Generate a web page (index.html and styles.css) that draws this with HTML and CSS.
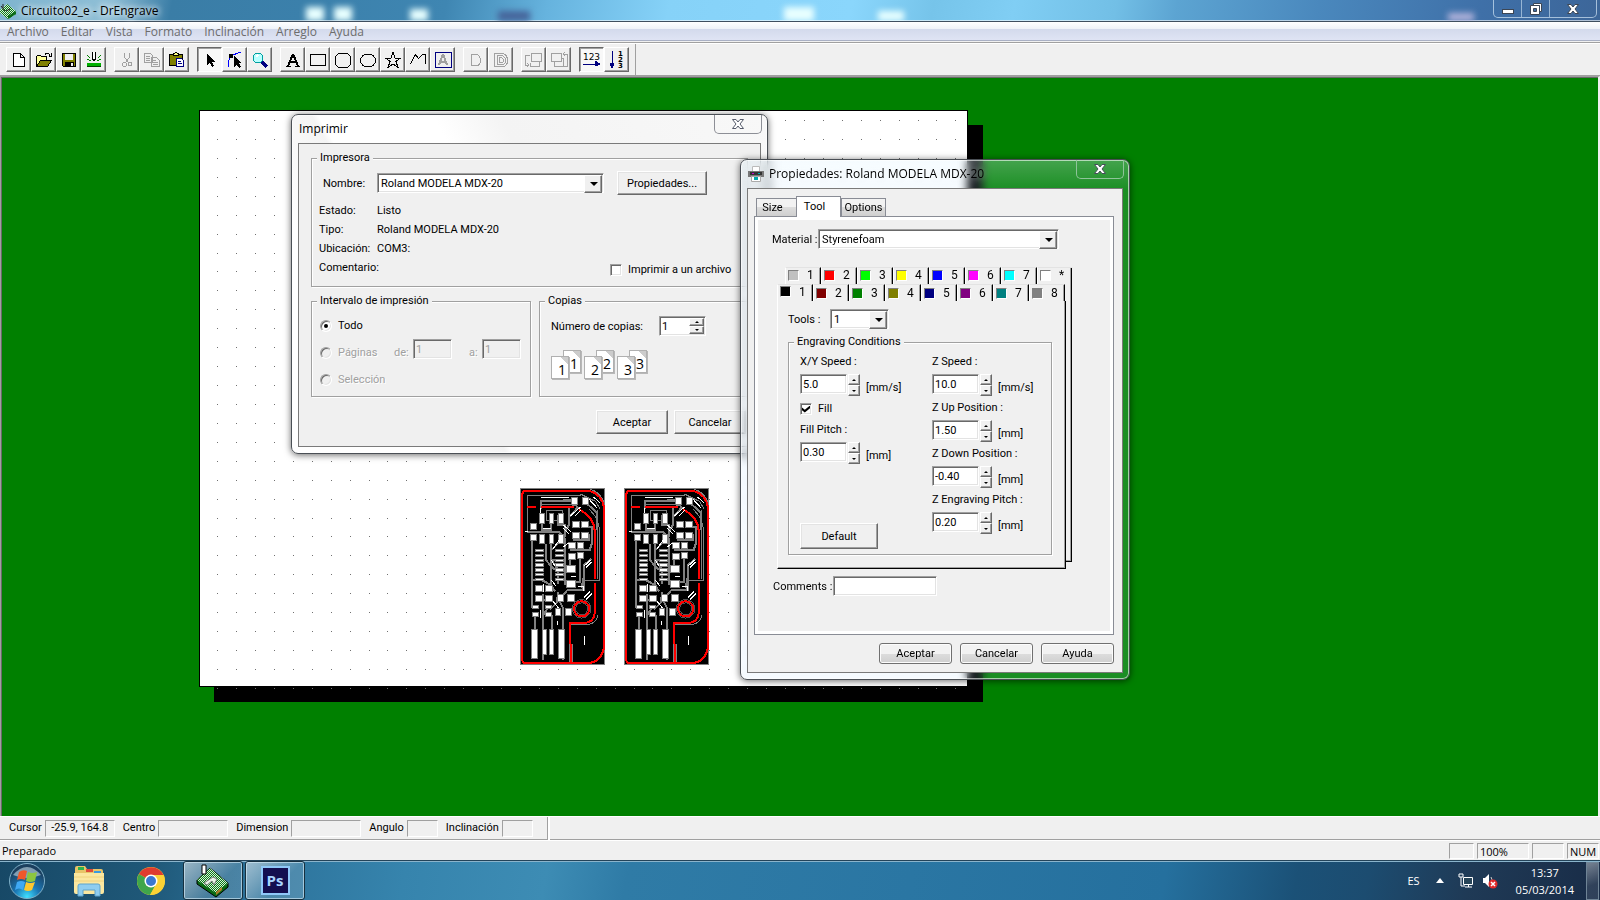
FILE: index.html
```html
<!DOCTYPE html>
<html lang="es">
<head>
  <meta charset="UTF-8" />
  <meta name="viewport" content="width=device-width, initial-scale=1.0"/>
  <title>Circuito02_e - DrEngrave</title>
  <link rel="stylesheet" href="styles.css">
</head>
<body>
  <!-- shared drawings -->
  <svg width="0" height="0" class="defs">
    <defs>
      <pattern id="weave" width="2" height="2" patternUnits="userSpaceOnUse">
        <rect width="2" height="2" fill="#0a7a1a"/>
        <rect width="1" height="1" fill="#d8f0d8"/>
        <rect x="1" y="1" width="1" height="1" fill="#d8f0d8"/>
      </pattern>
      <symbol id="board" viewBox="30 24 255 530">
        <rect x="30" y="24" width="255" height="530" fill="#000"/>
        <g fill="none" stroke="#808080" stroke-width="3">
          <rect x="31.500" y="25.500" width="252" height="527"/>
          <path d="M52 45h160M52 45v110M212 42l45 22 14 24M240 27q40 12 44 55M95 72h90M110 92h48v30h-48zM262 90v205M238 88q28 25 30 60v152h-48M178 434h55q28-5 30-30M178 434v110M188 490v56M186 75h14v18M285 500q-8 35-44 50"/>
        </g>
        <g fill="none" stroke="#808080" stroke-width="6">
          <path d="M52 155h95l18 22v36h-20M66 180v200h12M94 85V63h96M75 410v40M99 340v200M99 405l14-20M126 405v45M99 360h25M66 300h30l26 14 14 20M124 190v120M124 210l40-40V135h-20v-30M124 130v20M96 130v20h30M160 540V385l-15-30v-20M145 310v-40l-20-30h30M178 78v55l-14 22M180 235v20M210 235v70h-18M222 255l22-20M222 255v75h-50l-18 20M165 200v110h10M235 140h12v45l-8 25h-60M190 180h48v-20M160 60h30M230 70l32 28v50M205 80l-25 28M140 350v18l-20 20M108 190v50l26 30M215 325l5-30"/>
        </g>
        <g fill="none" stroke="red" stroke-width="6">
          <path d="M37 42q0-9 9-9h194q36 10 42 50v420q-8 40-44 46H46q-9 0-9-9z"/>
          <path d="M52 81h27M94 81h98M208 88q44 24 46 62v147M254 309v92q-4 25-28 27h-46v62M182 490v58"/>
          <circle cx="215" cy="386" r="23"/>
        </g>
        <g fill="none" stroke="#808080" stroke-width="2">
          <circle cx="215" cy="386" r="28"/>
          <circle cx="215" cy="386" r="18"/>
        </g>
        <g fill="#fff" stroke="#808080" stroke-width="3">
          <path d="M89 100h14v30H89zM118 100h13v30h-13zM146 100h15v30h-15zM62 131h17v17H62zM62 162h17v19H62zM89 164h14v26H89zM118 164h12v26h-12zM146 164h15v26h-15zM184 53h18v20h-18zM218 53h18v20h-18zM188 125h20v16h-20zM215 125h20v16h-20zM188 157h20v18h-20zM215 157h20v18h-20zM176 188h21v17h-21zM203 188h17v17h-17zM176 220h21v17h-21zM203 218h17v17h-17zM169 256h28v22h-28zM169 301h28v21h-28zM77 317h21v17H77zM107 317h20v17h-20zM77 346h21v18H77zM107 346h20v18h-20zM143 344h16v20h-16zM173 343h20v20h-20zM135 386h16v20h-16zM167 386h17v20h-17zM67 376h18v9H67zM105 376h20v9h-20zM67 398h18v11H67zM105 398h20v11h-20zM64 448h18v87H64zM97 448h12v75H97zM118 448h12v75h-12zM146 448h18v87h-18z"/>
          <path d="M77 208h24v6H77zM77 223h24v6H77zM77 237h24v6H77zM77 251h24v9H77zM77 265h24v9H77zM77 281h24v6H77zM77 295h24v6H77zM135 208h26v6h-26zM135 223h26v6h-26zM135 237h26v6h-26zM135 251h26v9h-26zM135 265h26v9h-26zM135 281h26v6h-26zM135 295h26v6h-26z"/>
        </g>
        <g fill="none" stroke="#fff" stroke-width="3">
          <path d="M92 52h84M180 108l32-28M196 106l16-16M236 56l26 28M250 50l20 18M160 134l24 22M158 142l20 20M130 205l18-26M124 240l10 16M222 258l22-20M228 262l16-16M222 352l18-18M228 358l18-18M130 364l16 20M183 289h16M92 390v24M124 300l14 18M160 200l16-12M45 155h8M142 422v12M223 468v26M100 312v22M205 320h14v12M90 82v16M100 145h24"/>
        </g>
      </symbol>
    </defs>
  </svg>

  <header class="titlebar">
    <svg class="app-icon" width="16" height="18" viewBox="0 0 16 18">
      <path d="M0 8L7 2l9 7v3l-8 5-8-6z" fill="url(#weave)"/>
      <path d="M8 14l8-5v3l-8 5z" fill="#0a6a14"/>
      <path d="M1 4l4 5M3 2v4M6 9l4-2" stroke="#222" fill="none"/>
    </svg>
    <h1>Circuito02_e - DrEngrave</h1>
    <div class="wallpaper"><i class="blob b1"></i><i class="blob b2"></i><i class="blob b3"></i><i class="blob b4"></i><i class="blob b5"></i><i class="blob b6"></i><i class="blob b7"></i></div>
    <div class="window-buttons">
      <button aria-label="Minimizar"><svg width="12" height="10" viewBox="0 0 12 10"><rect x=".5" y="5.500" width="11" height="4" fill="#fff" stroke="#3c4654"/></svg></button>
      <button aria-label="Restaurar"><svg width="12" height="12" viewBox="0 0 12 12"><path d="M3.500.5h8v8h-2v-6h-6z" fill="#fff" stroke="#3c4654"/><path d="M.5 2.500h9v9h-9zM3.500 5.500v3h3v-3z" fill="#fff" fill-rule="evenodd" stroke="#3c4654"/></svg></button>
      <button aria-label="Cerrar" class="close"><svg width="12" height="10" viewBox="0 0 12 10"><path d="M.5.5h3.500l2 2.500 2-2.500h3.500L8 5l3.500 4.500H8L6 7 4 9.500H.5L4 5z" fill="#fff" stroke="#3c4654"/></svg></button>
    </div>
  </header>

  <nav class="menubar">
    <a href="#">Archivo</a>
    <a href="#">Editar</a>
    <a href="#">Vista</a>
    <a href="#">Formato</a>
    <a href="#">Inclinación</a>
    <a href="#">Arreglo</a>
    <a href="#">Ayuda</a>
  </nav>

  <div class="toolbar">
    <div class="tool-group">
      <button aria-label="Nuevo"><svg viewBox="0 0 20 20"><path d="M4.500 3.500h7l4 4v9h-11zM11.500 3.500v4h4" fill="#fff" stroke="#000"/></svg></button>
      <button aria-label="Abrir"><svg viewBox="0 0 20 20"><path d="M2.500 16.500v-10l1-1h3l1 1h5v3" fill="#ffff9c" stroke="#000"/><path d="M2.500 16.500l4-6h11l-4 6z" fill="#808000" stroke="#000"/><path d="M11 4.500q3-3 5 1M17.500 3v3h-3" fill="none" stroke="#000"/></svg></button>
      <button aria-label="Guardar"><svg viewBox="0 0 20 20"><path d="M3.500 3.500h13v13h-12l-1-1z" fill="#808000" stroke="#000"/><path d="M6 4h8v6H6z" fill="#efefef"/><path d="M6 12h9v4H6z" fill="#000"/><path d="M12 13h2v3h-2z" fill="#efefef"/></svg></button>
      <button aria-label="Grabar"><svg viewBox="0 0 20 20"><path d="M8.500 2v7l1.500 2 1.500-2V2" fill="#fff" stroke="#000"/><path d="M3 5l3 3M3 9l4 2M17 5l-3 3M17 9l-4 2" stroke="#008000" fill="none"/><path d="M3 13h14v4H3z" fill="#00b000"/><path d="M3 16h14v1H3z" fill="#004000"/></svg></button>
    </div>
    <div class="tool-group">
      <button aria-label="Cortar" disabled><svg viewBox="0 0 20 20"><g fill="none" stroke="#a0a0a0"><path d="M7.500 3v4l4 6M12.500 3v4l-4 6"/><circle cx="7.500" cy="14.500" r="2"/><circle cx="13" cy="14" r="2"/></g></svg></button>
      <button aria-label="Copiar" disabled><svg viewBox="0 0 20 20"><g fill="#efefef" stroke="#a0a0a0"><path d="M2.500 3.500h6l2 2v7h-8zM9.500 7.500h5l3 3v6h-8z"/><path d="M4 6h4M4 8h4M4 10h4M11 10h3M11 12h5M11 14h5"/></g></svg></button>
      <button aria-label="Pegar"><svg viewBox="0 0 20 20"><path d="M2.500 4.500h13v11h-13z" fill="#808000" stroke="#000"/><path d="M6.500 5.500v-2h1l1-1h1l1 1h1v2z" fill="#ffff80" stroke="#000"/><path d="M9.500 8.500h5l2 2v6h-7z" fill="#fff" stroke="#000080"/><path d="M11 11h3M11 13h4" stroke="#000080"/></svg></button>
    </div>
    <div class="tool-group">
      <button aria-label="Seleccionar" class="pressed"><svg viewBox="0 0 20 20"><path d="M7 4v11l3-2 2 4 2-1-2-4h3z" fill="#000"/></svg></button>
      <button aria-label="Editar nodos"><svg viewBox="0 0 20 20"><path d="M3.500 17q0-8 2-11l10-4" fill="none" stroke="#00f"/><path d="M4 4h4v4H4z" fill="#000"/><path d="M9 6v11l3-2 2 3 2-1-2-4h3z" fill="#000"/></svg></button>
      <button aria-label="Zoom"><svg viewBox="0 0 20 20"><circle cx="8" cy="8" r="5" fill="#b8ffff" stroke="#00a0a0"/><path d="M6 7l2-2" stroke="#fff" stroke-width="2"/><path d="M12 12l5 5" stroke="#000080" stroke-width="4"/></svg></button>
    </div>
    <div class="tool-group">
      <button aria-label="Texto"><svg viewBox="0 0 20 20"><path d="M5 16L9.500 5h1L15 16M7 12h6" fill="none" stroke="#000" stroke-width="2"/><path d="M3 16.500h5M12 16.500h5" stroke="#000"/></svg></button>
      <button aria-label="Rectángulo"><svg viewBox="0 0 20 20"><path d="M2.500 4.500h15v11h-15z" fill="none" stroke="#000"/></svg></button>
      <button aria-label="Rectángulo redondeado"><svg viewBox="0 0 20 20"><path d="M5.500 3.500h9l3 3v8l-3 3h-9l-3-3v-8z" fill="none" stroke="#000"/></svg></button>
      <button aria-label="Elipse"><svg viewBox="0 0 20 20"><ellipse cx="10" cy="10.500" rx="7.500" ry="6.500" fill="none" stroke="#000"/></svg></button>
      <button aria-label="Estrella"><svg viewBox="0 0 20 20"><path d="M10 2.500l2 5.500h5.500l-4.500 3.500 2 6-5-3.500-5 3.500 2-6L2.500 8H8z" fill="none" stroke="#000"/></svg></button>
      <button aria-label="Polilínea"><svg viewBox="0 0 20 20"><path d="M2.500 14l5-9.500 3 4 4-4h2.500v9" fill="none" stroke="#000"/></svg></button>
      <button aria-label="Marco de texto"><svg viewBox="0 0 20 20"><path d="M2 2.500h16v15H2z" fill="#efefef" stroke="#000080"/><path d="M6 15l3.500-10h1L14 15M7.500 11.500h5" fill="none" stroke="#a0a0a0" stroke-width="2"/></svg></button>
    </div>
    <div class="tool-group">
      <button aria-label="Contorno" disabled><svg viewBox="0 0 20 20"><path d="M5.500 4.500h5q4 1 4 6t-4 5h-5z" fill="none" stroke="#a0a0a0"/></svg></button>
      <button aria-label="Contorno doble" disabled><svg viewBox="0 0 20 20"><path d="M3.500 3.500h8q5 1 5 7t-5 6h-8zM6.500 5.500h4q4 1 4 5t-4 4h-4zM8.500 7.500h2q2 1 2 3t-2 2h-2z" fill="none" stroke="#a0a0a0"/></svg></button>
    </div>
    <div class="tool-group">
      <button aria-label="Enviar atrás" disabled><svg viewBox="0 0 20 20"><path d="M7.500 3.500h10v8h-10zM15.500 12v4.500h-9v-4M1.500 5v10h3M2 5h4M3 13l2 2-2 2" fill="none" stroke="#a0a0a0"/></svg></button>
      <button aria-label="Traer al frente" disabled><svg viewBox="0 0 20 20"><path d="M2.500 3.500h10v8h-10zM5.500 12v4.500h9V8h-2M14 4.500h4V16h-3M16 2l-2 2 2 2" fill="none" stroke="#a0a0a0"/></svg></button>
    </div>
    <div class="tool-group">
      <button class="pressed horizontal"><span>123</span><svg viewBox="0 0 18 5"><path d="M0 3h17M12 0l5 3-5 2z" fill="#000080" stroke="#000080"/></svg></button>
      <button class="vertical"><svg viewBox="0 0 5 18"><path d="M2 0v17M0 12l2 5 2-5z" fill="#000080" stroke="#000080"/></svg><span>1<br>2<br>3</span></button>
    </div>
  </div>

  <main class="workspace">
    <div class="sheet">
      <svg id="dots" width="768" height="578"></svg>
      <svg class="board first" width="85" height="177"><use href="#board"/></svg>
      <svg class="board second" width="85" height="177"><use href="#board"/></svg>
    </div>
  </main>

  <footer class="infobar">
    <span>Cursor</span><output class="wide">-25.9, 164.8</output>
    <span>Centro</span><output class="wide"></output>
    <span>Dimension</span><output class="wide"></output>
    <span>Angulo</span><output class="narrow"></output>
    <span>Inclinación</span><output class="narrow"></output>
  </footer>
  <footer class="statusbar">
    <span class="status">Preparado</span>
    <span class="pane small"></span>
    <span class="pane zoom">100%</span>
    <span class="pane medium"></span>
    <span class="pane medium">NUM</span>
  </footer>

  <footer class="taskbar">
    <button class="start" aria-label="Inicio">
      <svg width="38" height="38" viewBox="0 0 38 38">
        <defs><radialGradient id="orb" cx=".5" cy=".95" r=".8"><stop offset="0" stop-color="#3fe0ff"/><stop offset=".45" stop-color="#1a76b4"/><stop offset="1" stop-color="#1b3f5e"/></radialGradient></defs>
        <circle cx="19" cy="19" r="17.500" fill="url(#orb)" stroke="#7fb0c8"/>
        <path d="M5 13q14-16 28 0-14 6-28 0z" fill="#c4dbe6" opacity=".6"/>
        <path d="M11 10q4-3 8-1l-2 9q-4-2-8 0z" fill="#f0582a"/>
        <path d="M20 10q4 2 9 0l-2 9q-5 2-9 0z" fill="#8cc63f"/>
        <path d="M9 20q4-2 8 0l-2 8q-4-3-8 0z" fill="#3fa9f5"/>
        <path d="M18 20q4 2 9 0l-3 8q-4 2-8 0z" fill="#fdc82f"/>
      </svg>
    </button>
    <button class="task" aria-label="Explorador">
      <svg width="34" height="32" viewBox="0 0 34 32">
        <path d="M3 3q0-2 2-2h8l2 3h14q2 0 2 2v20H3z" fill="#e8c468"/>
        <path d="M6 2h6v3H6z" fill="#2fb34a"/><path d="M14 4h7v3h-7z" fill="#e04a3a"/><path d="M22 6h7v3h-7z" fill="#3a9ae0"/>
        <path d="M2 8h30v19q0 2-2 2H4q-2 0-2-2z" fill="#fbe7a0"/><path d="M2 12h30M2 16h30" stroke="#f0d27c"/>
        <path d="M6 31V21q0-2 2-2h18q2 0 2 2v10h-5v-6H11v6z" fill="#8fcdf0" stroke="#5fa4cc"/>
      </svg>
    </button>
    <button class="task" aria-label="Chrome">
      <svg width="30" height="30" viewBox="0 0 30 30">
        <circle cx="15" cy="15" r="14" fill="#fbd235"/>
        <path d="M15 15L2.900 8A14 14 0 0 1 27.500 9z" fill="#df3c2f"/>
        <path d="M2.900 8A14 14 0 0 0 14 29l6-10-5-4z" fill="#3fa64b"/>
        <path d="M15 9h12.500a14 14 0 0 1-13.500 20l6-11z" fill="#fbd235"/>
        <circle cx="15" cy="15" r="6.500" fill="#fff"/><circle cx="15" cy="15" r="5" fill="#3b78d0"/>
      </svg>
    </button>
    <button class="task running" aria-label="DrEngrave">
      <svg width="34" height="34" viewBox="0 0 34 34">
        <path d="M1 16L14 4l18 15v4L20 33 1 20z" fill="#0a6a14" stroke="#000"/>
        <path d="M1 16L14 4l18 15-12 10z" fill="url(#weave)"/>
        <path d="M6 1h4v9H6z" fill="#fff" stroke="#000"/><path d="M8 19l9-6 4 2-3 6-2-4-5 4z" fill="#e8f4e8" stroke="#777"/>
        <path d="M20 28l6-5v3l-6 5z" fill="#b07a28"/>
      </svg>
    </button>
    <button class="task running ps"><span>Ps</span></button>
    <div class="tray">
      <span class="lang">ES</span>
      <svg width="8" height="5" viewBox="0 0 8 5"><path d="M4 0l4 5H0z" fill="#fff"/></svg>
      <svg width="16" height="16" viewBox="0 0 16 16"><path d="M5.500 4.500h9v7h-9z" fill="#274457" stroke="#fff"/><path d="M7 14h7M10.500 12v2M1 1v3h4V1M3 4v9h4M2 0v2M4 0v2" fill="none" stroke="#fff"/></svg>
      <svg width="16" height="16" viewBox="0 0 16 16"><path d="M1 5h2l4-4v13L3 10H1z" fill="#fff"/><path d="M9 4q2 3 0 5" fill="none" stroke="#ccc"/><circle cx="11" cy="11" r="4.500" fill="#e02a2a"/><path d="M9 9l4 4M13 9l-4 4" stroke="#fff" stroke-width="1.500"/></svg>
      <time>13:37<br>05/03/2014</time>
    </div>
    <button class="show-desktop" aria-label="Mostrar escritorio"></button>
  </footer>

  <section class="dialog print" role="dialog">
    <div class="dialog-title">
      <h2>Imprimir</h2>
      <button class="dialog-close" aria-label="Cerrar"><svg width="12" height="10" viewBox="0 0 12 10"><path d="M.5.5h3.500l2 2.500 2-2.500h3.500L8 5l3.500 4.500H8L6 7 4 9.500H.5L4 5z" fill="#fff" stroke="#555a6a"/></svg></button>
    </div>
    <div class="dialog-body">
      <fieldset class="printer">
        <legend>Impresora</legend>
        <div class="name-row">
          <label for="printer">Nombre:</label>
          <span class="combo"><select id="printer"><option>Roland MODELA MDX-20</option></select></span>
          <button class="classic">Propiedades...</button>
        </div>
        <div class="details">
          <dl>
            <dt>Estado:</dt><dd>Listo</dd>
            <dt>Tipo:</dt><dd>Roland MODELA MDX-20</dd>
            <dt>Ubicación:</dt><dd>COM3:</dd>
            <dt>Comentario:</dt><dd></dd>
          </dl>
          <label class="tick"><input type="checkbox"> Imprimir a un archivo</label>
        </div>
      </fieldset>
      <div class="columns">
        <fieldset class="range">
          <legend>Intervalo de impresión</legend>
          <div class="range-row"><label class="tick"><input type="radio" name="range" checked> Todo</label></div>
          <div class="range-row off">
            <label class="tick"><input type="radio" name="range" disabled> Páginas</label>
            <label for="from">de:</label><input id="from" type="text" value="1" disabled>
            <label for="to" class="to">a:</label><input id="to" type="text" value="1" disabled>
          </div>
          <div class="range-row off"><label class="tick"><input type="radio" name="range" disabled> Selección</label></div>
        </fieldset>
        <fieldset class="copies">
          <legend>Copias</legend>
          <div class="copies-row">
            <label for="copies">Número de copias:</label>
            <span class="spin joined"><input id="copies" type="text" value="1"><span class="arrows"><button aria-label="Más"></button><button aria-label="Menos"></button></span></span>
          </div>
          <div class="pages">
            <span class="pair"><b class="page back">1</b><b class="page">1</b></span>
            <span class="pair"><b class="page back">2</b><b class="page">2</b></span>
            <span class="pair"><b class="page back">3</b><b class="page">3</b></span>
          </div>
        </fieldset>
      </div>
      <div class="actions">
        <button class="classic">Aceptar</button>
        <button class="classic">Cancelar</button>
      </div>
    </div>
  </section>

  <section class="dialog props" role="dialog">
    <div class="dialog-title">
      <svg width="16" height="16" viewBox="0 0 16 16"><path d="M4.500.5h7v5h-7z" fill="#fff" stroke="#bbb"/><path d="M0 5h16v6H0z" fill="#777"/><path d="M2 6h12v3H2z" fill="#333"/><path d="M4 7h2v1H4z" fill="#c0c"/><path d="M10 7h2v1h-2z" fill="#0aa"/><path d="M3.500 10.500h9v5h-9z" fill="#fff" stroke="#aaa"/><path d="M6 11h4v3H6z" fill="#0aa"/></svg>
      <h2>Propiedades: Roland MODELA MDX-20</h2>
      <button class="dialog-close" aria-label="Cerrar"><svg width="12" height="10" viewBox="0 0 12 10"><path d="M.5.5h3.500l2 2.500 2-2.500h3.500L8 5l3.500 4.500H8L6 7 4 9.500H.5L4 5z" fill="#fff" stroke="#46505a"/></svg></button>
    </div>
    <div class="dialog-body">
      <div class="tabs">
        <button>Size</button>
        <button class="active">Tool</button>
        <button>Options</button>
      </div>
      <div class="panel">
        <div class="material-row">
          <label for="material">Material :</label>
          <span class="combo"><select id="material"><option>Styrenefoam</option></select></span>
        </div>
        <div class="pens">
          <div class="pen-tabs rear">
            <button><i class="c-silver"></i>1</button>
            <button><i class="c-red"></i>2</button>
            <button><i class="c-lime"></i>3</button>
            <button><i class="c-yellow"></i>4</button>
            <button><i class="c-blue"></i>5</button>
            <button><i class="c-magenta"></i>6</button>
            <button><i class="c-cyan"></i>7</button>
            <button><i class="c-white"></i>*</button>
          </div>
          <div class="pen-tabs">
            <button class="active"><i class="c-black"></i>1</button>
            <button><i class="c-maroon"></i>2</button>
            <button><i class="c-green"></i>3</button>
            <button><i class="c-olive"></i>4</button>
            <button><i class="c-navy"></i>5</button>
            <button><i class="c-purple"></i>6</button>
            <button><i class="c-teal"></i>7</button>
            <button><i class="c-gray"></i>8</button>
          </div>
          <div class="pen-sheet">
            <div class="tools-row">
              <label for="tool">Tools :</label>
              <span class="combo"><select id="tool"><option>1</option></select></span>
            </div>
            <fieldset class="conditions">
              <legend>Engraving Conditions</legend>
              <div class="column">
                <div class="field">
                  <label for="xy">X/Y Speed :</label>
                  <div class="spin"><input id="xy" type="text" value="5.0"><span class="arrows"><button aria-label="Más"></button><button aria-label="Menos"></button></span><span class="unit">[mm/s]</span></div>
                </div>
                <label class="tick"><input type="checkbox" checked> Fill</label>
                <div class="field">
                  <label for="pitch">Fill Pitch :</label>
                  <div class="spin"><input id="pitch" type="text" value="0.30"><span class="arrows"><button aria-label="Más"></button><button aria-label="Menos"></button></span><span class="unit">[mm]</span></div>
                </div>
                <button class="classic default">Default</button>
              </div>
              <div class="column">
                <div class="field">
                  <label for="z">Z Speed :</label>
                  <div class="spin"><input id="z" type="text" value="10.0"><span class="arrows"><button aria-label="Más"></button><button aria-label="Menos"></button></span><span class="unit">[mm/s]</span></div>
                </div>
                <div class="field">
                  <label for="zup">Z Up Position :</label>
                  <div class="spin"><input id="zup" type="text" value="1.50"><span class="arrows"><button aria-label="Más"></button><button aria-label="Menos"></button></span><span class="unit">[mm]</span></div>
                </div>
                <div class="field">
                  <label for="zdown">Z Down Position :</label>
                  <div class="spin"><input id="zdown" type="text" value="-0.40"><span class="arrows"><button aria-label="Más"></button><button aria-label="Menos"></button></span><span class="unit">[mm]</span></div>
                </div>
                <div class="field">
                  <label for="zpitch">Z Engraving Pitch :</label>
                  <div class="spin"><input id="zpitch" type="text" value="0.20"><span class="arrows"><button aria-label="Más"></button><button aria-label="Menos"></button></span><span class="unit">[mm]</span></div>
                </div>
              </div>
            </fieldset>
          </div>
        </div>
        <div class="comments-row">
          <label for="comments">Comments :</label>
          <input id="comments" type="text">
        </div>
      </div>
      <div class="actions">
        <button class="soft">Aceptar</button>
        <button class="soft">Cancelar</button>
        <button class="soft">Ayuda</button>
      </div>
    </div>
  </section>

  <script src="script.js"></script>
</body>
</html>
```

FILE: script.js
```js
// 5 mm grid on the sheet, each point snapped to a whole pixel
const step = 18.93;
let d = '';

for (let row = 0; row < 31; row++) {
  for (let col = 0; col < 40; col++) {
    const x = Math.floor(17.6 + col * step);
    const y = Math.floor(9.5 + row * step);
    d += 'M' + x + ' ' + y + 'h1v1h-1z';
  }
}

const path = document.createElementNS('http://www.w3.org/2000/svg', 'path');
path.setAttribute('d', d);
path.setAttribute('fill', '#707070');
document.getElementById('dots').appendChild(path);
```

FILE: styles.css
```css
* {
  box-sizing: border-box;
}
body {
  --segoe: "Open Sans", "Noto Sans", sans-serif;
  margin: 0;
  height: 100vh;
  display: flex;
  flex-direction: column;
  position: relative;
  overflow: hidden;
  background: #f0f0f0;
  color: #000;
  font-family: Roboto, sans-serif;
  font-size: 11px;
}
button, input, select {
  font: inherit;
  color: inherit;
  margin: 0;
  padding: 0;
}
label, legend {
  white-space: nowrap;
}
h1, h2 {
  margin: 0;
  font-family: var(--segoe);
  font-size: 12px;
  font-weight: normal;
}
.defs {
  position: absolute;
}

/* main window */
.titlebar {
  position: relative;
  flex: none;
  height: 22px;
  display: flex;
  align-items: center;
  border-bottom: 1px solid #3f4f5f;
  box-shadow: inset 0 -1px 0 rgba(255, 255, 255, 0.6);
  background: linear-gradient(100deg, #7fb4cf 0, #8fbfd6 110px, #3a7da6 170px, #3b80ab 300px, #3f86b2 440px, #66b3de 540px, #86d2f8 660px, #8ad6fc 840px, #76c4ea 920px, #80cef4 1000px, #72bfe6 1100px, #5ca4d2 1160px, #4a88bd 1300px, #3f70a8 1460px, #3c6496 1600px);
}
.app-icon {
  z-index: 1;
}
.titlebar h1 {
  z-index: 1;
  margin-left: 5px;
  flex: 1;
  text-shadow: 0 0 6px #fff, 0 0 8px #fff;
}
.wallpaper {
  position: absolute;
  inset: 0;
  overflow: hidden;
}
.blob {
  position: absolute;
  bottom: 0;
  height: 14px;
  width: 18px;
  background: #e8ffff;
  filter: blur(3px);
}
.b1 { left: 306px; }
.b2 { left: 334px; }
.b3 { left: 410px; height: 12px; }
.b4 { left: 498px; width: 32px; height: 10px; background: #46649a; }
.b5 { left: 784px; width: 30px; }
.b6 { left: 878px; width: 26px; height: 10px; }
.b7 { left: 1448px; width: 26px; height: 8px; background: #b4b4dc; }
.window-buttons {
  z-index: 1;
  align-self: flex-start;
  display: flex;
  height: 18px;
  margin-right: 3px;
  border: 1px solid rgba(210, 230, 245, 0.7);
  border-top: 0;
  border-radius: 0 0 5px 5px;
}
.window-buttons button {
  width: 28px;
  display: grid;
  place-items: center;
  background: none;
  border: 0;
  border-right: 1px solid rgba(210, 230, 245, 0.6);
}
.window-buttons .close {
  width: 46px;
  border: 0;
}
.menubar {
  flex: none;
  height: 22px;
  display: flex;
  gap: 12px;
  padding-left: 7px;
  font: 12px/19px var(--segoe);
  border-bottom: 1px solid #fff;
  background: linear-gradient(#fff 0, #eef2f8 7px, #d3daec 7px, #dfe4f4 18px, #a9b0c4 18px, #a9b0c4 19px, #f0f0f0 19px, #f0f0f0 20px, #a0a0a0 20px);
}
.menubar a {
  color: #6d6d6d;
  text-decoration: none;
}
.toolbar {
  flex: none;
  height: 32px;
  display: flex;
  gap: 8px;
  padding: 3px 0 0 6px;
  border-bottom: 1px solid #a0a0a0;
  box-shadow: 0 1px 0 #696969;
}
.tool-group {
  display: flex;
}
.tool-group:last-child {
  margin: -3px 0 0;
  padding: 3px 6px 0 0;
  border-right: 1px solid #a0a0a0;
}
.toolbar button {
  width: 25px;
  height: 25px;
  display: grid;
  place-items: center;
  background: #f0f0f0;
  border: 1px solid;
  border-color: #fff #696969 #696969 #fff;
  box-shadow: inset -1px -1px 0 #a0a0a0;
}
.toolbar button svg {
  width: 20px;
  height: 20px;
  shape-rendering: crispEdges;
}
.toolbar .pressed {
  background: #f8f8f8;
  border-color: #696969 #fff #fff #696969;
  box-shadow: inset 1px 1px 0 #a0a0a0;
}
.toolbar .horizontal {
  align-content: center;
  font: 9px/8px "DejaVu Sans", sans-serif;
}
.toolbar .horizontal svg {
  width: 18px;
  height: 5px;
}
.toolbar .vertical {
  display: flex;
  align-items: center;
  justify-content: center;
  gap: 3px;
  font: bold 7px/6px "DejaVu Sans", sans-serif;
}
.toolbar .vertical svg {
  width: 5px;
  height: 18px;
}
.workspace {
  flex: 1;
  position: relative;
  overflow: hidden;
  background: #008000;
  border: solid #a0a0a0;
  border-width: 1px 2px 0 1px;
  border-right-color: #f0f0f0;
  box-shadow: inset 1px 1px 0 #696969;
}
.sheet {
  position: absolute;
  left: 198px;
  top: 33px;
  width: 769px;
  height: 577px;
  background: #fff;
  border: 1px solid #000;
  box-shadow: 15px 15px 0 #000;
}
#dots, .board {
  display: block;
  shape-rendering: crispEdges;
}
.board {
  position: absolute;
  top: 377px;
}
.board.first {
  left: 320px;
}
.board.second {
  left: 424px;
}
.infobar {
  flex: none;
  height: 24px;
  display: flex;
  align-items: center;
  padding-left: 9px;
  line-height: 14px;
  border-top: 1px solid #fff;
  border-bottom: 1px solid #a0a0a0;
}
.infobar output {
  height: 17px;
  margin: 0 8px 0 3px;
  border: 1px solid;
  border-color: #a0a0a0 #fff #fff #a0a0a0;
  text-align: center;
}
.infobar .wide {
  width: 70px;
}
.infobar .narrow {
  width: 31px;
}
.infobar::after {
  content: "";
  width: 2px;
  height: 23px;
  margin-left: 6px;
  border-left: 1px solid #a0a0a0;
  background: #fff;
}
.statusbar {
  flex: none;
  height: 20px;
  display: flex;
  gap: 3px;
  padding: 2px 1px 1px 2px;
  font: 11px/16px var(--segoe);
  border-top: 1px solid #fff;
}
.status {
  flex: 1;
}
.pane {
  padding-left: 2px;
  border: 1px solid;
  border-color: #a0a0a0 #fff #fff #a0a0a0;
}
.pane.small { width: 25px; }
.pane.medium { width: 32px; }
.pane.zoom { width: 52px; }

.taskbar {
  flex: none;
  height: 40px;
  display: flex;
  align-items: center;
  color: #fff;
  border-top: 1px solid #24445a;
  box-shadow: inset 0 1px 0 #8ab4cc;
  background: linear-gradient(100deg, #174866 0, #1f5878 150px, #2c7199 250px, #3684ad 400px, #3d8cb4 540px, #2f7ba6 620px, #2a76a3 900px, #25709e 1150px, #1b5177 1280px, #1c4c70 1350px, #1f3a56 1450px, #182a45 1600px);
}
.taskbar button {
  background: none;
  border: 0;
  display: grid;
  place-items: center;
}
.taskbar .start {
  width: 57px;
  padding-right: 3px;
}
.taskbar .task {
  width: 60px;
  height: 39px;
  margin-left: 2px;
}
.taskbar .running {
  border: 1px solid #16303f;
  border-radius: 3px;
  box-shadow: inset 0 0 0 1px rgba(220, 240, 250, 0.6);
  background: linear-gradient(135deg, rgba(255, 255, 255, 0.55), rgba(255, 255, 255, 0.15) 60%);
}
.ps span {
  width: 29px;
  height: 29px;
  border: 2px solid #8fc8f8;
  background: #140f50;
  color: #a8d4ff;
  font: bold 15px/24px "Open Sans", sans-serif;
}
.tray {
  margin-left: auto;
  display: flex;
  align-items: center;
  gap: 16px;
  font: 11px/17px var(--segoe);
}
.tray svg + svg {
  margin-left: -2px;
}
.tray svg + svg + svg {
  margin-left: -8px;
}
.tray time {
  margin-left: 2px;
  text-align: center;
}
.taskbar .show-desktop {
  width: 13px;
  height: 38px;
  margin: 0 1px 0 12px;
  border: 1px solid #6f8496;
  background: linear-gradient(160deg, rgba(255, 255, 255, 0.4), rgba(255, 255, 255, 0.1) 60%);
}

/* dialogs */
.dialog {
  position: absolute;
  border: 1px solid #4a4f55;
  border-radius: 7px;
  box-shadow: 0 1px 7px rgba(0, 0, 0, 0.6), inset 0 0 0 1px rgba(255, 255, 255, 0.6);
}
.print {
  left: 291px;
  top: 114px;
  width: 477px;
  background: linear-gradient(60deg, #fff 20%, #f4f4f4 32%, #fff 33%, #fff 50%, #f4f4f4 60%, #f8f8f8);
}
.props {
  left: 740px;
  top: 159px;
  width: 390px;
  backdrop-filter: blur(4px);
  background: linear-gradient(rgba(225, 245, 255, 0.3), rgba(190, 225, 255, 0.14) 30px);
}
.dialog-title {
  height: 28px;
  display: flex;
  align-items: center;
  padding: 0 5px 0 7px;
}
.dialog-title h2 {
  flex: 1;
  line-height: 28px;
  text-shadow: 0 0 6px rgba(255, 255, 255, 0.6);
}
.props .dialog-title h2 {
  margin-left: 5px;
}
.dialog-close {
  align-self: flex-start;
  width: 48px;
  height: 19px;
  display: grid;
  place-items: center;
  background: none;
  border: 1px solid #8d8f96;
  border-top: 0;
  border-radius: 0 0 5px 5px;
}
.props .dialog-close {
  border-color: #8fc49a;
}
.dialog-body {
  margin: 0 6px 6px;
  padding: 7px 12px 12px;
  background: #f0f0f0;
  border: 1px solid #7a7a7a;
}
.props .dialog-body {
  padding: 7px 8px 8px 6px;
}
fieldset {
  min-width: 0;
  margin: 0;
  padding: 0 7px;
  border: 1px solid #a0a0a0;
  box-shadow: 1px 1px 0 #fff, inset 1px 1px 0 #fff;
}
legend {
  height: 14px;
  margin-left: -2px;
  padding: 0 3px;
  line-height: 14px;
  background: #f0f0f0;
}
.classic {
  height: 24px;
  background: #f0f0f0;
  border: 1px solid;
  border-color: #fff #696969 #696969 #fff;
  box-shadow: inset -1px -1px 0 #a0a0a0, inset 1px 1px 0 #e3e3e3;
}
.soft {
  width: 73px;
  height: 21px;
  border: 1px solid #707070;
  border-radius: 3px;
  box-shadow: inset 0 0 0 1px #fcfcfc;
  background: linear-gradient(#f2f2f2 50%, #dddddd 50%, #cfcfcf);
}
input[type="text"], .combo {
  height: 20px;
  background: #fff;
  border: 1px solid;
  border-color: #a0a0a0 #fff #fff #a0a0a0;
  border-radius: 0;
  box-shadow: inset 1px 1px 0 #696969, inset -1px -1px 0 #e3e3e3;
}
input[type="text"] {
  padding-left: 2px;
}
.combo {
  position: relative;
  display: block;
}
.combo select {
  width: 100%;
  height: 18px;
  padding-left: 3px;
  appearance: none;
  background: none;
  border: 0;
}
.combo::before {
  content: "";
  position: absolute;
  right: 1px;
  top: 1px;
  width: 16px;
  height: 16px;
  background: #f0f0f0;
  border: 1px solid;
  border-color: #fff #696969 #696969 #fff;
  box-shadow: inset -1px -1px 0 #a0a0a0;
}
.combo::after {
  content: "";
  position: absolute;
  right: 5px;
  top: 8px;
  border: solid transparent;
  border-width: 4px 4px 0;
  border-top-color: #000;
}
.tick {
  display: flex;
  align-items: center;
  gap: 6px;
  line-height: 14px;
}
.tick input {
  flex: none;
  appearance: none;
  width: 12px;
  height: 12px;
  display: grid;
  place-items: center;
  background: #fff;
  border: 1px solid;
  border-color: #a0a0a0 #fff #fff #a0a0a0;
  box-shadow: inset 1px 1px 0 #696969, inset -1px -1px 0 #e3e3e3;
}
.tick input[type="radio"] {
  border-radius: 50%;
}
.tick input[type="radio"]:checked::before {
  content: "";
  width: 4px;
  height: 4px;
  border-radius: 50%;
  background: #000;
}
.tick input[type="checkbox"]:checked::before {
  content: "";
  width: 8px;
  height: 7px;
  background: #000;
  clip-path: polygon(0 30%, 35% 62%, 100% 0, 100% 38%, 35% 100%, 0 68%);
}
.tick input:disabled {
  background: #f0f0f0;
}
.name-row {
  display: flex;
  align-items: center;
  height: 24px;
  margin-top: 6px;
  padding-left: 4px;
}
.name-row label {
  width: 54px;
}
.name-row .combo {
  width: 227px;
  margin-right: 13px;
}
.name-row .classic {
  width: 90px;
}
.details {
  display: flex;
  justify-content: space-between;
  align-items: flex-end;
  padding: 6px 0 9px;
}
.details .tick {
  width: 130px;
}
dl {
  margin: 0;
  display: grid;
  grid-template-columns: 58px auto;
  grid-auto-rows: 19px;
  line-height: 19px;
}
dd {
  margin: 0;
}
.columns {
  display: grid;
  grid-template-columns: 220px 1fr;
  gap: 8px;
  margin-top: 7px;
}
.range {
  padding: 4px 7px 3px;
}
.range-row {
  display: flex;
  align-items: center;
  height: 27px;
  padding-left: 1px;
}
.range-row .tick {
  width: 74px;
}
.range-row label[for] {
  width: 19px;
}
.range-row label.to {
  width: 13px;
  margin-left: 17px;
}
.range-row input[type="text"] {
  width: 39px;
  background: #f0f0f0;
  align-self: flex-start;
}
.off {
  color: #a0a0a0;
  text-shadow: 1px 1px 0 #fff;
}
.copies {
  padding: 0 11px;
}
.copies legend {
  margin-left: -6px;
}
.copies-row {
  display: flex;
  align-items: center;
  margin-top: 8px;
}
.copies-row > label {
  width: 108px;
}
.spin {
  display: flex;
  align-items: flex-start;
  height: 21px;
}
.spin input[type="text"] {
  width: 47px;
  margin-right: 1px;
}
.spin .unit {
  align-self: flex-end;
  margin-left: 6px;
  line-height: 14px;
}
.arrows {
  display: flex;
  flex-direction: column;
}
.arrows button {
  width: 12px;
  height: 11px;
  display: grid;
  place-items: center;
  background: #f0f0f0;
  border: 1px solid;
  border-color: #fff #696969 #696969 #fff;
  box-shadow: inset -1px -1px 0 #a0a0a0;
}
.arrows button::before {
  content: "";
  border: solid transparent;
  border-width: 0 2px 2px;
  border-bottom-color: #000;
}
.arrows button:last-child::before {
  border-width: 2px 2px 0;
  border-top-color: #000;
}
.joined {
  position: relative;
  height: 20px;
}
.joined .arrows {
  position: absolute;
  right: 3px;
  top: 2px;
}
.joined .arrows button {
  width: 15px;
  height: 8px;
}
.pages {
  display: flex;
  gap: 3px;
  margin-top: 14px;
}
.pair {
  display: flex;
  flex-direction: row-reverse;
  width: 30px;
}
.page {
  width: 18px;
  height: 23px;
  padding: 4px 2px 0 0;
  border: 1px solid #b0b0b0;
  box-shadow: 1px 1px 0 #b8b8b8;
  background: linear-gradient(225deg, #ccc 5px, #fff 5px);
  font: 14px/18px "Open Sans", sans-serif;
  text-align: right;
}
.page:last-child {
  margin: 6px -6px 0 0;
  z-index: 1;
}
.actions {
  display: flex;
  justify-content: flex-end;
  gap: 6px;
  margin-top: 13px;
}
.actions .classic {
  width: 72px;
}
.print .actions {
  margin-right: 2px;
}
.props .actions {
  gap: 8px;
  margin-top: 8px;
}

/* tool properties */
.tabs {
  display: flex;
  align-items: flex-end;
  height: 20px;
  padding-left: 2px;
}
.tabs button {
  width: 45px;
  height: 18px;
  border: 1px solid #898c95;
  border-bottom: 0;
  background: linear-gradient(#f2f2f2 50%, #dddddd 50%, #cfcfcf);
}
.tabs button:first-child {
  width: 40px;
  padding-right: 8px;
  border-right: 0;
}
.tabs .active {
  height: 21px;
  margin-bottom: -1px;
  padding: 0 8px 2px 0;
  background: #fff;
  z-index: 1;
}
.panel {
  padding: 12px 0 38px 17px;
  border: 1px solid #898c95;
  box-shadow: inset 0 0 0 3px #fff;
}
.material-row, .tools-row, .comments-row {
  display: flex;
  align-items: center;
}
.material-row label {
  width: 46px;
}
.material-row .combo {
  width: 241px;
}
.pens {
  position: relative;
  width: 289px;
  margin: 18px 0 0 5px;
}
.pens::before {
  content: "";
  position: absolute;
  inset: 1px -6px 7px 280px;
  border: solid #000;
  border-width: 0 1px 1px 0;
  box-shadow: inset -1px -1px 0 #a0a0a0;
}
.pen-tabs {
  position: relative;
  display: flex;
  height: 17px;
  font-size: 12px;
}
.pen-tabs.rear {
  padding-left: 8px;
}
.pen-tabs button {
  flex: none;
  width: 36px;
  display: flex;
  align-items: center;
  padding-left: 2px;
  gap: 8px;
  background: none;
  border: solid;
  border-width: 1px 1px 0;
  border-color: #e3e3e3 #000 #000 #fff;
  box-shadow: inset -1px 0 0 #a0a0a0;
}
.pen-tabs.rear button {
  padding-bottom: 2px;
}
.pen-tabs.rear button:last-child {
  border-right-color: transparent;
  box-shadow: none;
}
.pen-tabs i {
  width: 11px;
  height: 11px;
  border: 1px solid;
  border-color: #808080 #fff #fff #808080;
}
.pen-tabs .active {
  padding-bottom: 3px;
}
.c-silver { background: #c0c0c0; }
.c-red { background: #f00; }
.c-lime { background: #0f0; }
.c-yellow { background: #ff0; }
.c-blue { background: #00f; }
.c-magenta { background: #f0f; }
.c-cyan { background: #0ff; }
.c-white { background: #fff; }
.c-black { background: #000; }
.c-maroon { background: #800000; }
.c-green { background: #008000; }
.c-olive { background: #808000; }
.c-navy { background: #000080; }
.c-purple { background: #800080; }
.c-teal { background: #008080; }
.c-gray { background: #808080; }
.pen-sheet {
  position: relative;
  padding: 8px 13px 13px 10px;
  background: #f0f0f0;
  border: solid;
  border-width: 0 1px 1px;
  border-color: #000 #000 #000 #fff;
  box-shadow: inset -1px -1px 0 #a0a0a0;
}
.tools-row label {
  width: 42px;
}
.tools-row .combo {
  width: 59px;
}
.conditions {
  margin-top: 6px;
  display: grid;
  grid-template-columns: 132px 1fr;
  padding: 6px 0 5px 11px;
}
.conditions legend {
  margin-left: -6px;
}
.column {
  display: flex;
  flex-direction: column;
  gap: 6px;
}
.column:first-of-type {
  gap: 7px;
}
.field label {
  display: block;
  height: 14px;
  margin-bottom: 5px;
  line-height: 14px;
}
.default {
  width: 78px;
  height: 26px;
  margin-top: 53px;
}
.comments-row {
  margin: 7px 0 0 1px;
}
.comments-row label {
  width: 60px;
}
.comments-row input {
  width: 104px;
}
```
